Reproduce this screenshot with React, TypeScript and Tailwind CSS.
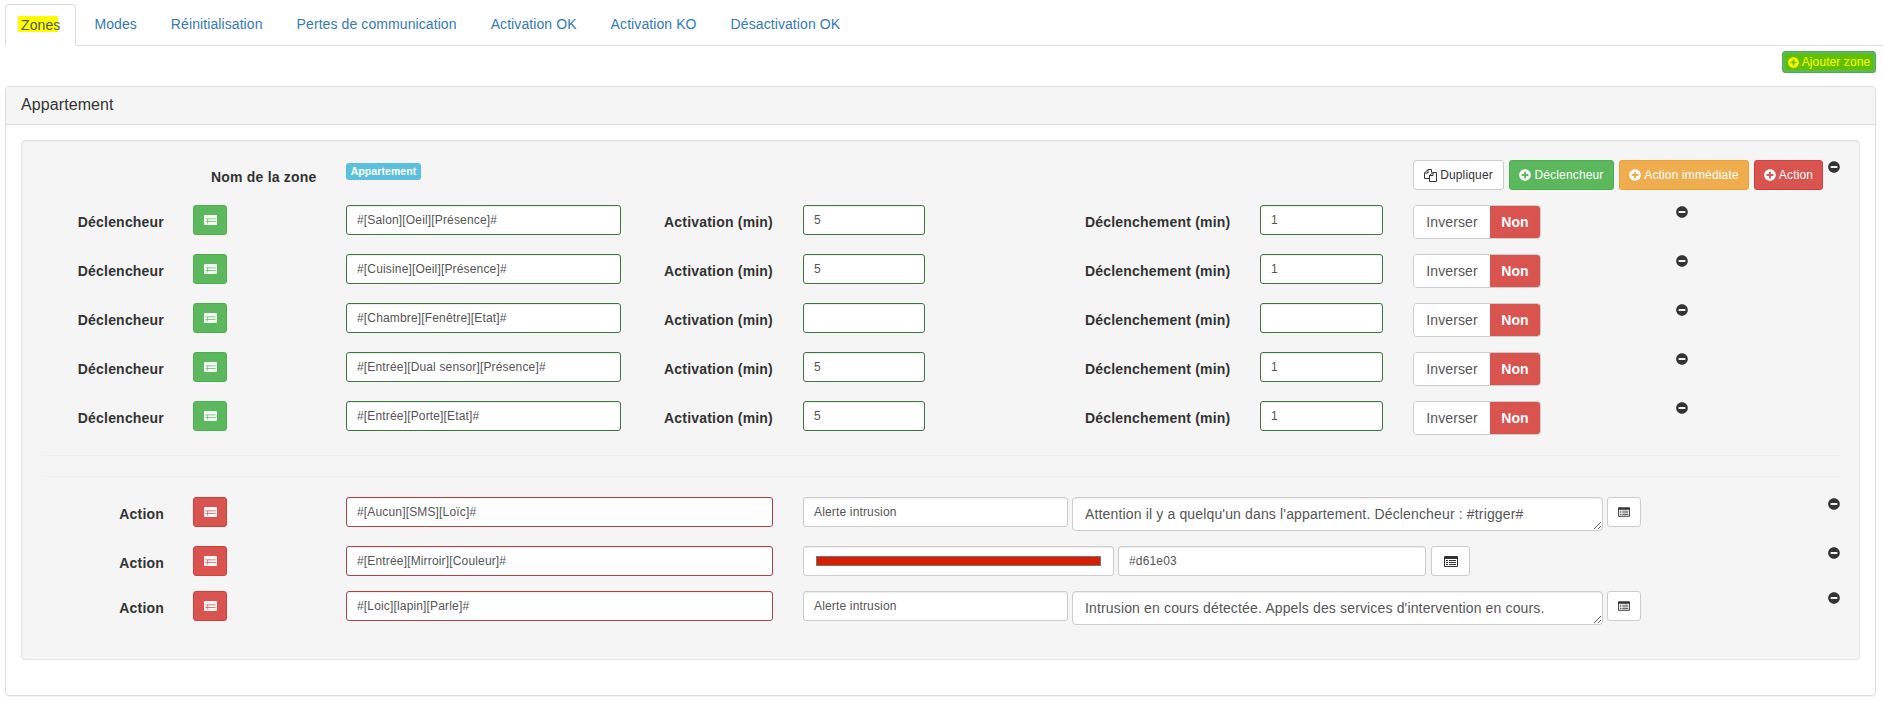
import React from "react";
import { FaPlusCircle, FaMinusCircle } from "react-icons/fa";

function ListAlt({ className = "" }: { className?: string }) {
  return (
    <svg viewBox="0 0 14 11" className={className} fill="currentColor" fillRule="evenodd" aria-hidden="true">
      <path d="M1 0h12a1 1 0 0 1 1 1v9a1 1 0 0 1-1 1H1a1 1 0 0 1-1-1V1a1 1 0 0 1 1-1zM1 3v7h12V3zM2 4h2v1H2zM5 4h7v1H5zM2 6h2v1H2zM5 6h7v1H5zM2 8h2v1H2zM5 8h7v1H5z" />
    </svg>
  );
}

function ListAltLight({ className = "" }: { className?: string }) {
  return (
    <svg viewBox="0 0 13 10" className={className} fill="currentColor" fillRule="evenodd" aria-hidden="true">
      <path d="M0 1a1 1 0 0 1 1-1h11a1 1 0 0 1 1 1v8a1 1 0 0 1-1 1H1a1 1 0 0 1-1-1zM1.5 3.6h10v.7h-10zM1.5 6.2h10v.7h-10zM3.4 4.3h.7v1.9h-.7zM3.4 6.9h.7v1.6h-.7z" />
    </svg>
  );
}

function FilesIcon({ className = "" }: { className?: string }) {
  return (
    <svg viewBox="0 0 13 13" className={className} fill="none" stroke="currentColor" strokeWidth="1" aria-hidden="true">
      <path d="M7.5 3.5v-3H4L.5 4v5.5h5M4 .5V4H.5" />
      <path d="M9 3.5h3.5v9h-7v-6zM9 3.5v3H5.5" />
    </svg>
  );
}

const tabs = ["Modes", "Réinitialisation", "Pertes de communication", "Activation OK", "Activation KO", "Désactivation OK"];

const triggers = [
  { cmd: "#[Salon][Oeil][Présence]#", a: "5", d: "1" },
  { cmd: "#[Cuisine][Oeil][Présence]#", a: "5", d: "1" },
  { cmd: "#[Chambre][Fenêtre][Etat]#", a: "", d: "" },
  { cmd: "#[Entrée][Dual sensor][Présence]#", a: "5", d: "1" },
  { cmd: "#[Entrée][Porte][Etat]#", a: "5", d: "1" },
];

const inputBase =
  "block h-[30px] rounded-[3px] border bg-white px-[10px] py-[5px] text-[12px] leading-[18px] tracking-[0.16px] text-[#555] shadow-[inset_0_1px_1px_rgba(0,0,0,0.075)] outline-none";

function Input({ value, tone, className = "" }: { value: string; tone: "ok" | "err" | "none"; className?: string }) {
  const border = tone === "ok" ? "border-[#3c763d]" : tone === "err" ? "border-[#a94442]" : "border-[#ccc]";
  return <input readOnly value={value} className={`${inputBase} ${border} ${className}`} />;
}

function Label({ children, className = "" }: { children: React.ReactNode; className?: string }) {
  return <div className={`pt-[7px] text-[14px] leading-5 font-bold tracking-[0.2px] text-[#333] whitespace-nowrap ${className}`}>{children}</div>;
}

function IconButton({ tone }: { tone: "green" | "red" }) {
  const color = tone === "green" ? "bg-[#5cb85c] border-[#4cae4c]" : "bg-[#d9534f] border-[#d43f3a]";
  return (
    <div className={`ml-[29px] flex h-[30px] w-[34px] shrink-0 items-center justify-center rounded-[3px] border text-white ${color}`}>
      <ListAltLight className="h-[10px] w-[13px] opacity-95" />
    </div>
  );
}

function Minus({ className = "" }: { className?: string }) {
  return <FaMinusCircle className={`size-[12px] shrink-0 text-[#333] ${className}`} />;
}

function TriggerRow({ cmd, a, d }: { cmd: string; a: string; d: string }) {
  return (
    <div className="mb-[15px] flex h-[34px] items-start">
      <Label className="w-[123px] text-right">Déclencheur</Label>
      <IconButton tone="green" />
      <Input value={cmd} tone="ok" className="ml-[119px] w-[275px]" />
      <Label className="ml-[43px] w-[109px]">Activation (min)</Label>
      <Input value={a} tone="ok" className="ml-[30px] w-[122px]" />
      <Label className="ml-[160px] w-[144px]">Déclenchement (min)</Label>
      <Input value={d} tone="ok" className="ml-[31px] w-[123px]" />
      <div className="ml-[30px] flex h-[34px] w-[128px] overflow-hidden rounded-[4px] border border-[#ccc] text-[14px] leading-5">
        <div className="flex w-[76px] items-center justify-center bg-white text-[#555]">Inverser</div>
        <div className="flex flex-1 items-center justify-center bg-[#d9534f] font-bold text-white">Non</div>
      </div>
      <Minus className="ml-[135px] mt-px" />
    </div>
  );
}

function MessageFields({ msg }: { msg: string }) {
  return (
    <>
      <Input value="Alerte intrusion" tone="none" className="ml-[30px] w-[265px]" />
      <textarea
        readOnly
        rows={1}
        value={msg}
        className="ml-[4px] block h-[34px] w-[531px] rounded-[4px] border border-[#ccc] bg-white px-3 py-[6px] text-[14px] leading-5 tracking-[0.15px] text-[#555] shadow-[inset_0_1px_1px_rgba(0,0,0,0.075)] outline-none"
      />
      <div className="ml-[4px] flex h-[30px] w-[34px] items-center justify-center rounded-[3px] border border-[#ccc] bg-white text-[#333]">
        <ListAlt className="h-[10px] w-[12px]" />
      </div>
    </>
  );
}

function ActionRow({ cmd, children, minusGap, short }: { cmd: string; children: React.ReactNode; minusGap: string; short?: boolean }) {
  return (
    <div className={`flex items-start ${short ? "mb-[15px] h-[30px]" : "mb-[15px] h-[34px]"}`}>
      <Label className="w-[123px] text-right">Action</Label>
      <IconButton tone="red" />
      <Input value={cmd} tone="err" className="ml-[119px] w-[427px]" />
      {children}
      <Minus className={`mt-px ${minusGap}`} />
    </div>
  );
}

export default function App() {
  return (
    <div className="h-[706px] overflow-hidden bg-white pl-[5px] pr-[7px] pt-[4px] font-['Liberation_Sans',Arial,sans-serif] text-[14px] leading-5 tracking-[0.09px] text-[#333]">
      <div className="-mr-[7px] flex h-[42px] border-b border-[#ddd]">
        <div className="-mb-px h-[42px] rounded-t-[4px] border border-[#ddd] border-b-white bg-white px-[15px] py-[10px] text-[#555]">
          <span className="relative inline-block">
            <span className="absolute -left-[3px] top-[1px] h-[16px] w-[40px] bg-[#ffff00]" />
            <span className="relative">Zones</span>
          </span>
        </div>
        {tabs.map((t) => (
          <div key={t} className="ml-[2px] px-[16px] py-[10px] text-[#337ab7]">
            {t}
          </div>
        ))}
      </div>

      <div className="mt-[5px] flex justify-end">
        <div className="flex h-[22px] w-[94px] items-center justify-center rounded-[3px] border border-[#4cae4c] bg-[#5cb85c] p-[2px]">
          <div className="flex h-full w-full items-center justify-center gap-[3px] bg-[#5fbf00] text-[12px] leading-[18px] whitespace-nowrap text-[#ffff00]">
            <FaPlusCircle className="size-[11px]" />
            Ajouter zone
          </div>
        </div>
      </div>

      <div className="mt-[13px] h-[610px] rounded-[4px] border border-[#ddd] bg-white shadow-[0_1px_1px_rgba(0,0,0,0.05)]">
        <div className="h-[38px] rounded-t-[3px] border-b border-[#ddd] bg-[#f5f5f5] px-[15px] py-[9px] text-[16px] leading-[18px] text-[#333]">
          Appartement
        </div>
        <div className="p-[15px]">
          <div className="h-[520px] rounded-[4px] border border-[#e3e3e3] bg-[#f5f5f5] pb-[19px] pl-[19px] pr-[19px] pt-[19px] shadow-[inset_0_1px_1px_rgba(0,0,0,0.05)]">
            <div className="flex h-[45px] items-start">
              <Label className="ml-[170px] w-[105px] pt-[7px]">Nom de la zone</Label>
              <div className="ml-[30px] mt-[3px] flex h-[17px] w-[75px] items-center justify-center rounded-[3px] bg-[#5bc0de] text-[10.5px] leading-none font-bold text-white">
                Appartement
              </div>
              <div className="ml-auto flex h-[30px] gap-[5px] text-[12px] leading-[18px] tracking-[0.15px] whitespace-nowrap">
                <div className="flex w-[91px] items-center justify-center gap-[3px] rounded-[3px] border border-[#ccc] bg-white text-[#333]">
                  <FilesIcon className="size-[13px]" />
                  Dupliquer
                </div>
                <div className="flex w-[105px] items-center justify-center gap-[3px] rounded-[3px] border border-[#4cae4c] bg-[#5cb85c] text-white">
                  <FaPlusCircle className="size-[12px]" />
                  Déclencheur
                </div>
                <div className="flex w-[130px] items-center justify-center gap-[3px] rounded-[3px] border border-[#eea236] bg-[#f0ad4e] text-white">
                  <FaPlusCircle className="size-[12px]" />
                  Action immédiate
                </div>
                <div className="flex w-[69px] items-center justify-center gap-[3px] rounded-[3px] border border-[#d43f3a] bg-[#d9534f] text-white">
                  <FaPlusCircle className="size-[12px]" />
                  Action
                </div>
              </div>
              <Minus className="ml-[5px] mt-[1px]" />
            </div>

            {triggers.map((t) => (
              <TriggerRow key={t.cmd} {...t} />
            ))}

            <div className="mt-[20px] border-t border-[#eee]" />
            <div className="mt-[20px] mb-[20px] border-t border-[#eee]" />

            <ActionRow cmd="#[Aucun][SMS][Loïc]#" minusGap="ml-[187px]">
              <MessageFields msg="Attention il y a quelqu'un dans l'appartement. Déclencheur : #trigger#" />
            </ActionRow>
            <ActionRow cmd="#[Entrée][Mirroir][Couleur]#" minusGap="ml-[358px]" short>
              <div className="ml-[30px] flex h-[30px] w-[311px] items-center rounded-[3px] border border-[#ccc] bg-white px-[12px] shadow-[inset_0_1px_1px_rgba(0,0,0,0.075)]">
                <div className="h-[10px] w-full border border-[#767676] bg-[#d61e03]" />
              </div>
              <Input value="#d61e03" tone="none" className="ml-[4px] w-[308px]" />
              <div className="ml-[5px] flex h-[30px] w-[39px] items-center justify-center rounded-[3px] border border-[#ccc] bg-white text-[#333]">
                <ListAlt className="h-[11px] w-[14px]" />
              </div>
            </ActionRow>
            <ActionRow cmd="#[Loic][lapin][Parle]#" minusGap="ml-[187px]">
              <MessageFields msg="Intrusion en cours détectée. Appels des services d'intervention en cours." />
            </ActionRow>
          </div>
        </div>
      </div>
    </div>
  );
}
